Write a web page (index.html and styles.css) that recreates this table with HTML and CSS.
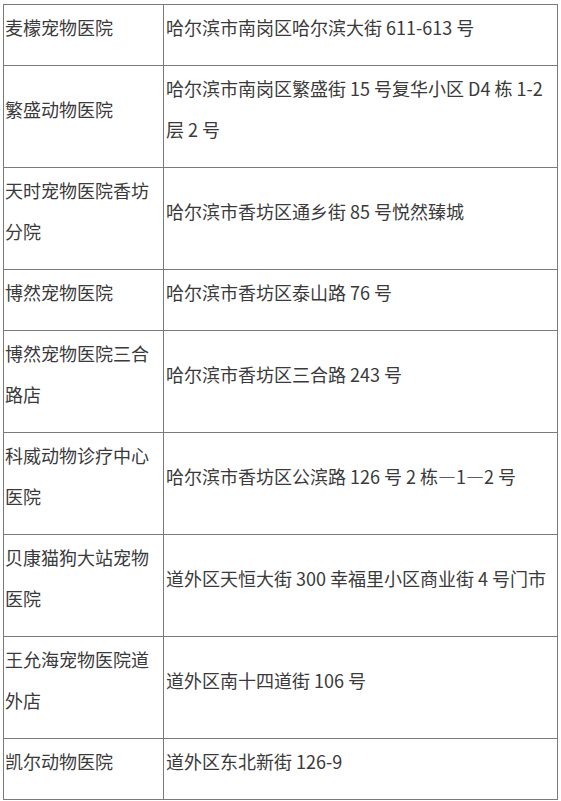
FILE: index.html
```html
<!DOCTYPE html>
<html lang="zh-CN">
<head>
<meta charset="utf-8">
<title>宠物医院地址</title>
<link rel="stylesheet" href="styles.css">
</head>
<body>
<table class="list">
  <colgroup><col class="c-name"><col class="c-addr"></colgroup>
  <tbody>
    <tr><td>麦檬宠物医院</td><td>哈尔滨市南岗区哈尔滨大街 611-613 号</td></tr>
    <tr><td>繁盛动物医院</td><td>哈尔滨市南岗区繁盛街 15 号复华小区 D4 栋 1-2 层 2 号</td></tr>
    <tr><td>天时宠物医院香坊分院</td><td>哈尔滨市香坊区通乡街 85 号悦然臻城</td></tr>
    <tr><td>博然宠物医院</td><td>哈尔滨市香坊区泰山路 76 号</td></tr>
    <tr><td>博然宠物医院三合路店</td><td>哈尔滨市香坊区三合路 243 号</td></tr>
    <tr><td>科威动物诊疗中心医院</td><td>哈尔滨市香坊区公滨路 126 号 2 栋—1—2 号</td></tr>
    <tr><td>贝康猫狗大站宠物医院</td><td>道外区天恒大街 300 幸福里小区商业街 4 号门市</td></tr>
    <tr><td>王允海宠物医院道外店</td><td>道外区南十四道街 106 号</td></tr>
    <tr><td>凯尔动物医院</td><td>道外区东北新街 126-9</td></tr>
  </tbody>
</table>
</body>
</html>
```
FILE: styles.css
```css
html, body {
  margin: 0;
  padding: 0;
  background: #ffffff;
}
body {
  padding: 4px 0 0 3px;
  font-family: "Noto Sans CJK SC", "Noto Sans", sans-serif;
  font-size: 18px;
  color: #3a3a3a;
}
.list {
  border-collapse: collapse;
  table-layout: fixed;
  width: 554px;
}
.c-name { width: 160px; }
.c-addr { width: 394px; }
.list td {
  border: 1px solid #7a7a7a;
  padding: 2px 1px 17px 1px;
  line-height: 41px;
  vertical-align: middle;
}
.list td:first-child {
  padding-left: 1px;
}
.list td:last-child {
  padding-left: 2px;
}
```
